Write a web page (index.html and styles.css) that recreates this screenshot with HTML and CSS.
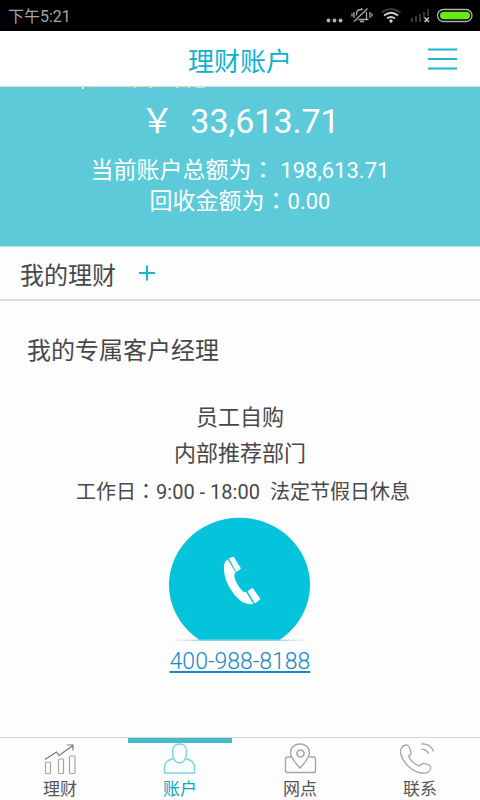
FILE: index.html
```html
<!DOCTYPE html>
<html lang="zh-CN">
<head>
<meta charset="utf-8">
<meta name="viewport" content="width=device-width, initial-scale=1">
<title>理财账户</title>
<link rel="stylesheet" href="styles.css">
</head>
<body>
<div class="status">
  <span>下午5:21</span>
  <svg class="status-icons" width="150" height="30" viewBox="0 0 150 30" fill="none" aria-hidden="true">
    <g fill="#b4b4b4"><circle cx="4.500" cy="20.500" r="1.900"/><circle cx="10.500" cy="20.500" r="1.900"/><circle cx="16.500" cy="20.500" r="1.900"/></g>
    <g stroke="#a8a8a8" stroke-width="1.300">
      <path d="M30.500 19.500h14M32.500 19v-5c0-3 2-4.500 5-4.500s5 1.500 5 4.500v5M36 21.500h4M37.500 9.500V8"/>
      <path d="M29 21.500 44 7.500" stroke="#000" stroke-width="4"/>
      <path d="M30 21.500 43.500 8.500"/>
      <path d="M30 12v6M28 13.500v3M46 12v6M48 13.500v3"/>
    </g>
    <path d="M57.500 12.500q9.500-7 19 0" stroke="#3c3c3c" stroke-width="2"/>
    <path d="M60 15.500q7-5.500 14 0M63 18.500q4-3 8 0" stroke="#d0d0d0" stroke-width="1.800"/>
    <circle cx="67" cy="21" r="1.700" fill="#d0d0d0"/>
    <path d="M88 22v-4M92 22v-6M96 22v-8M100 18v-6M104 16V9" stroke="#393939" stroke-width="2"/>
    <path d="m100.500 17.500 4.500 4.500m0-4.500-4.500 4.500" stroke="#d0d0d0" stroke-width="1.400"/>
    <rect x="113.500" y="9.500" width="34.500" height="12" rx="6" stroke="#b4aeba" stroke-width="1.300"/>
    <rect x="116" y="11.800" width="30" height="7.500" rx="3.700" fill="#6be914"/>
  </svg>
</div>

<header class="header">
  <h1>理财账户</h1>
  <button class="menu" type="button" aria-label="菜单">
    <svg width="30" height="24" viewBox="0 0 30 24" aria-hidden="true"><path d="M0 2.500h29M0 12h29M0 21.500h29" stroke="#18b8cf" stroke-width="2"/></svg>
  </button>
</header>

<main>
  <section class="summary">
    <svg class="scroll-edge" width="480" height="3" viewBox="0 0 480 3" aria-hidden="true"><path d="M82 0h1.500v2H82z" fill="#fff"/><path d="M134 0h2v1h-2zM149 0h3v1h-3zM176 0h3v1h-3zM188 0h2v1h-2zM196 0h9v1h-9z" fill="#b5e6ec"/></svg>
    <p class="amount"><span>￥</span><span>33,613.71</span></p>
    <p class="line"><span class="label">当前账户总额为<span class="colon" lang="zh-TW">：</span>&nbsp;</span><span>198,613.71</span></p>
    <p class="line"><span class="label">回收金额为<span class="colon" lang="zh-TW">：</span></span><span>0.00</span></p>
  </section>

  <section class="mine">
    <h2>我的理财</h2>
    <button class="add" type="button" aria-label="添加">
      <svg width="18" height="18" viewBox="0 0 18 18" aria-hidden="true"><path d="M1 9h16M9 1.500v15" stroke="#18b8cf" stroke-width="2"/></svg>
    </button>
  </section>

  <section class="manager">
    <h2>我的专属客户经理</h2>
    <p class="name">员工自购</p>
    <p class="name">内部推荐部门</p>
    <p class="hours"><span>工作日<span class="colon" lang="zh-TW">：</span>9:00 - 18:00</span><span>法定节假日休息</span></p>
    <a class="call" href="tel:400-988-8188">
      <svg width="142" height="126" viewBox="0 0 142 126" aria-hidden="true">
        <defs><linearGradient id="edge"><stop offset="0" stop-color="#8bd3df" stop-opacity="0"/><stop offset=".25" stop-color="#8bd3df"/><stop offset=".75" stop-color="#8bd3df"/><stop offset="1" stop-color="#8bd3df" stop-opacity="0"/></linearGradient></defs>
        <path d="M30.500 123A70.500 67 0 1 1 110.500 123z" fill="#04c4dc"/>
        <path d="M2 122.500h138v1.500H2z" fill="url(#edge)"/>
        <g fill="#fff" stroke="#fff" stroke-linejoin="round">
          <path d="M60.500 41.500 64.500 40.200 71.500 51.500 67.500 54.500z"/>
          <path d="M79 74.300 83.500 71.500 91 82 86 86z"/>
          <path stroke="none" d="M58.800 42.500C55.500 44.500 54.600 48 55 52c.3 5 1 9 3 13.500C60.500 71.500 64.500 77 69 81.500c4.500 4.500 10 6.500 15.400 5.400L77 74.700c-1.500.8-2.700.3-4-1.200-4-4.500-6.500-9-7.500-13.500-.4-2 0-3.500 1.200-4.500z"/>
        </g>
      </svg>
      <span>400-988-8188</span>
    </a>
  </section>
</main>

<nav class="tabs">
  <a href="#licai">
    <svg width="34" height="32" viewBox="0 0 34 32" fill="none" stroke="#a4a4a4" stroke-width="1.200" aria-hidden="true"><rect x="2.500" y="19" width="5" height="11.500" rx="1"/><rect x="15.500" y="16" width="5" height="14.500" rx="1"/><rect x="26.500" y="13" width="5.500" height="17.500" rx="1"/><path d="M2 16.500 13.500 9l2.500 3.500L30 2.500M24 2h6v5.500" stroke="#777"/></svg>
    <span>理财</span>
  </a>
  <a href="#account" class="active" aria-current="page">
    <svg width="34" height="32" viewBox="0 0 34 32" fill="none" stroke="#7dd4de" stroke-width="1.400" aria-hidden="true"><path d="M10.500 15.500C5 17 1.500 19 1.500 24v6h30v-6c0-5-3.500-7-9-8.500"/><path d="M16.500 1C11 1 9.500 4 9.500 9s2 11 7 11 7-6 7-11-1.500-8-7-8z"/></svg>
    <span>账户</span>
  </a>
  <a href="#branches">
    <svg width="34" height="32" viewBox="0 0 34 32" fill="none" stroke="#a4a4a4" stroke-width="1.300" aria-hidden="true"><path d="M8.500 14H4.500Q2.500 14 2.500 16v11.500q0 2 2 2h26q2 0 2-2V16q0-2-2-2h-4"/><path d="M17 25C12 19 7.500 15 7.500 9.500 7.500 4 12 1 17 1s9.500 3 9.500 8.500C26.500 15 22 19 17 25z"/><circle cx="17.500" cy="10.500" r="3.500" stroke-width="1.600"/></svg>
    <span>网点</span>
  </a>
  <a href="#contact">
    <svg width="40" height="32" viewBox="0 0 40 32" fill="none" stroke="#a4a4a4" stroke-width="1.300" stroke-linejoin="round" aria-hidden="true"><path d="M5.500 2C2 2.500-.5 7 .8 11c2 9 12 18.500 22 19 4 .5 7.500-1.500 8-5.500 0-3-5-3.500-7.500-4-2-.3-2.500 2-4 2.500C14 21 10.500 17.500 8.500 13.500c.5-1.500 3-1.500 2.500-3.500C10.500 7 9 1.500 5.500 2z"/><path d="M21.500 1c6-.5 10 2.500 12 7.500M21.500 6.500c3.500-.3 6 1.500 7 4.500"/></svg>
    <span>联系</span>
  </a>
</nav>
</body>
</html>
```
FILE: styles.css
```css
* {
  box-sizing: border-box;
}

body {
  margin: 0;
  min-height: 100vh;
  display: flex;
  flex-direction: column;
  background: #fdfdfd;
  color: #484848;
  font-family: Roboto, "Noto Sans CJK SC", sans-serif;
}

h1,
h2,
p {
  margin: 0;
  font-weight: 400;
}

button {
  padding: 0;
  border: 0;
  background: none;
  cursor: pointer;
}

svg {
  display: block;
}

.status {
  display: flex;
  justify-content: space-between;
  align-items: center;
  height: 31px;
  padding: 0 6px 2px 8px;
  background: #000;
  color: #a5a5a5;
  font-size: 16px;
}

.header {
  display: grid;
  grid-template-columns: 1fr auto 1fr;
  align-items: center;
  height: 56px;
  padding: 0 22px;
  background: #fff;
  border-bottom: 1px solid #e3d3d3;
}

.header h1 {
  grid-column: 2;
  padding-top: 6px;
  color: #0cb3ca;
  font-size: 26px;
  line-height: 36px;
}

.menu {
  justify-self: end;
}

main {
  flex: 1;
}

.summary {
  position: relative;
  padding: 14px 0 28px;
  background: #5ccad8;
  border-bottom: 1px solid #cfdcdd;
  color: #fff;
}

.scroll-edge {
  position: absolute;
  top: 0;
  left: 0;
}

.amount,
.line {
  display: flex;
  justify-content: center;
  align-items: baseline;
}

.amount {
  gap: 16px;
  height: 40px;
  margin-bottom: 15px;
  font-size: 34px;
  line-height: 40px;
}

.line {
  height: 31px;
  font-size: 22px;
  line-height: 30px;
}

.label {
  font-size: 23px;
}

.colon {
  font-family: "Noto Sans CJK TC", sans-serif;
  line-height: 1;
}

.mine {
  display: flex;
  align-items: center;
  gap: 22px;
  height: 54px;
  padding: 0 20px;
  border-bottom: 2px solid #dadada;
}

h2 {
  padding-top: 5px;
  font-size: 24px;
  line-height: 36px;
}

.manager {
  padding: 27px 0 0;
  text-align: center;
}

.manager h2 {
  margin-bottom: 31px;
  padding-left: 27px;
  text-align: left;
}

.name {
  font-size: 22px;
  line-height: 36px;
}

.hours {
  display: flex;
  justify-content: center;
  align-items: baseline;
  gap: 10px;
  height: 36px;
  margin: 2px 0 7px;
  padding-left: 6px;
  font-size: 20px;
  line-height: 36px;
}

.call {
  display: inline-flex;
  flex-direction: column;
  align-items: center;
  gap: 5px;
  color: #1b88c6;
  font-size: 23px;
  font-weight: 300;
  line-height: 28px;
}

.tabs {
  display: grid;
  grid-template-columns: repeat(4, 1fr);
  height: 63px;
  border-top: 1px solid #d4d4d4;
}

.tabs a {
  display: flex;
  flex-direction: column;
  align-items: center;
  border-top: 5px solid transparent;
  margin: 0 8px;
  color: #555;
  font-size: 17px;
  line-height: 28px;
  text-decoration: none;
}

.tabs .active {
  border-color: #42bdcb;
  color: #06a9bd;
}
```
